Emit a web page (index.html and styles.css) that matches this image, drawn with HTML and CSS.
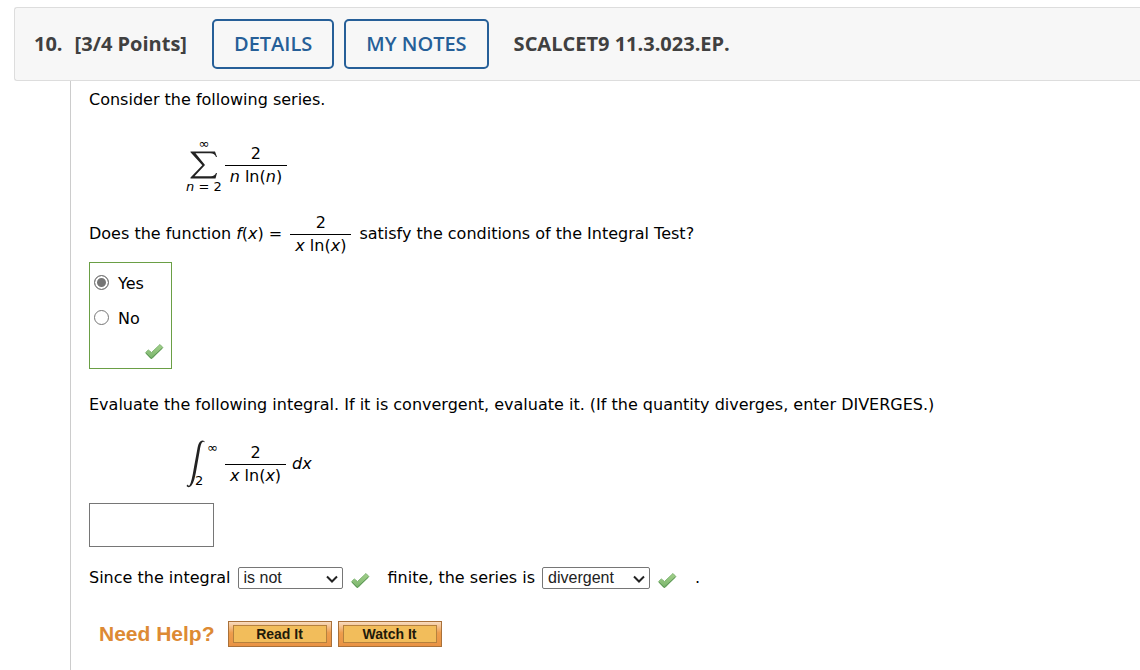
FILE: index.html
```
<!DOCTYPE html>
<html lang="en">
<head>
<meta charset="utf-8">
<title>Question 10</title>
<link rel="stylesheet" href="styles.css">
</head>
<body>
<svg class="defs" aria-hidden="true">
  <defs>
    <linearGradient id="leaf" x1="0" y1="0" x2="0" y2="1">
      <stop offset="0" stop-color="#a3d08a"/>
      <stop offset="1" stop-color="#7ab56c"/>
    </linearGradient>
    <symbol id="tick" viewBox="0 0 20 17">
      <path d="M1.5 9.7 4.3 7 7.5 9.5 16 1.5 18.8 4.5 8 15.5 6.8 15.5Z" fill="url(#leaf)" stroke="#7fb573" stroke-width="1" stroke-linejoin="round"/>
      <path d="M2 10.2 7.3 15.3 18.5 5" fill="none" stroke="#5c9656" stroke-width="1"/>
    </symbol>
  </defs>
</svg>
<main class="question">
  <header class="bar">
    <h1 class="points"><span>10.</span><span>[3/4 Points]</span></h1>
    <div class="actions">
      <button class="action" type="button">DETAILS</button>
      <button class="action" type="button">MY NOTES</button>
    </div>
    <span class="source">SCALCET9 11.3.023.EP.</span>
  </header>
  <form class="content">
    <p class="line">Consider the following series.</p>
    <div class="formula">
      <div class="sum">
        <span class="limit">∞</span>
        <svg class="sigma" viewBox="0 0 28 28" role="img" aria-label="sum"><path d="M.5 .5H25L27 6H26Q25 2.300 20 2.200H5.500L15 14 4.500 25.300H21Q25 25 26 22H27L25.500 27.500H.5V26.500L12.300 14.300.5 1.200Z" fill="#222"/></svg>
        <span class="limit"><i>n</i> = 2</span>
      </div>
      <div class="fraction"><span class="top">2</span><span class="bottom"><i>n</i> ln(<i>n</i>)</span></div>
    </div>
    <div class="line prompt">
      <span>Does the function <i>f</i>(<i>x</i>) =</span>
      <div class="fraction"><span class="top">2</span><span class="bottom"><i>x</i> ln(<i>x</i>)</span></div>
      <span>satisfy the conditions of the Integral Test?</span>
    </div>
    <fieldset class="choices" aria-label="Does it satisfy the conditions?">
      <label class="choice"><input type="radio" name="test" checked><span>Yes</span></label>
      <label class="choice"><input type="radio" name="test"><span>No</span></label>
      <svg class="tick" role="img" aria-label="Correct"><use href="#tick"/></svg>
    </fieldset>
    <p class="line">Evaluate the following integral. If it is convergent, evaluate it. (If the quantity diverges, enter DIVERGES.)</p>
    <div class="formula integral">
      <div class="bounds">
        <svg class="sign" viewBox="0 0 20 48" role="img" aria-label="integral"><path d="M19 2.500Q18.500 .5 16.500 .5 13 .5 11.700 7L8.200 26Q5.500 43 3.500 45.500 2 46 1.500 44.500L.5 46Q1.500 47.500 3.500 47 7.500 45.500 9.800 33L13.500 12Q14.700 3 16.500 2Q18 1.500 19 2.500Z" fill="#222"/></svg>
        <span class="limit upper">∞</span>
        <span class="limit lower">2</span>
      </div>
      <div class="fraction"><span class="top">2</span><span class="bottom"><i>x</i> ln(<i>x</i>)</span></div>
      <i class="differential">dx</i>
    </div>
    <input class="answer" type="text" aria-label="Value of the integral">
    <div class="line conclusion">
      <label for="finite">Since the integral</label>
      <div class="pick wide"><select id="finite"><option>is</option><option selected>is not</option></select><svg viewBox="0 0 12 8"><path d="M1 1.500 6 6.500 11 1.500"/></svg></div>
      <svg class="tick" role="img" aria-label="Correct"><use href="#tick"/></svg>
      <label class="second" for="result">finite, the series is</label>
      <div class="pick"><select id="result"><option>convergent</option><option selected>divergent</option></select><svg viewBox="0 0 12 8"><path d="M1 1.500 6 6.500 11 1.500"/></svg></div>
      <svg class="tick" role="img" aria-label="Correct"><use href="#tick"/></svg>
      <span class="stop">.</span>
    </div>
    <div class="help">
      <strong class="need">Need Help?</strong>
      <button class="aid" type="button"><span>Read It</span></button>
      <button class="aid" type="button"><span>Watch It</span></button>
    </div>
  </form>
</main>
</body>
</html>
```
FILE: styles.css
```
* { box-sizing: border-box; }
body {
  margin: 0;
  background: #fff;
  color: #000;
  font: 16px/20px Verdana, "DejaVu Sans", sans-serif;
}
.defs { position: absolute; width: 0; height: 0; }
.question {
  display: flex;
  flex-direction: column;
  min-height: 100vh;
  padding: 7px 0 0 14px;
}
.bar {
  display: flex;
  align-items: center;
  padding: 11px 19px;
  border: 1px solid #ddd;
  border-right: 0;
  border-radius: 3px 0 0 3px;
  background: #f7f7f7;
  color: #404040;
  font: 700 20px/26px "Open Sans", sans-serif;
}
.points { display: flex; gap: 12px; margin: 0; font: inherit; }
.actions { display: flex; gap: 10px; margin: 0 25px; }
.action {
  height: 50px;
  padding: 0 20px;
  border: 2px solid #265f98;
  border-radius: 5px;
  background: #f7f7f7;
  color: #265f98;
  font: 600 20px/26px "Open Sans", sans-serif;
}
.content {
  flex: 1;
  margin-left: 56px;
  padding: 9px 18px 0;
  border-left: 1px solid #ccc;
}
.line { margin: 0; }
.formula {
  display: flex;
  align-items: center;
  margin: 26px 0 17px 97px;
  gap: 3px;
}
.sum { display: flex; flex-direction: column; align-items: center; }
.limit { font-size: 13px; line-height: 15px; }
.sigma { width: 28px; height: 28px; }
.fraction { display: flex; flex-direction: column; text-align: center; }
.top { height: 24px; border-bottom: 1px solid #000; line-height: 24px; }
.bottom { height: 22px; padding: 0 5px; line-height: 22px; white-space: nowrap; }
.prompt { display: flex; align-items: center; gap: 8px; }
.choices {
  display: flex;
  flex-direction: column;
  width: 83px;
  height: 107px;
  margin: 5px 0 26px;
  padding: 11px 7px 8px 4px;
  border: 1px solid #6a9f45;
}
.choice { display: flex; gap: 9px; height: 35px; }
.choice input { width: 15px; height: 15px; margin: 1px 0; appearance: none; border: 1px solid #767676; border-radius: 50%; }
.choice input:checked { background: #767676; box-shadow: inset 0 0 0 2px #fff; }
.tick { width: 20px; height: 17px; flex: none; }
.choices .tick { align-self: flex-end; }
.integral { margin: 25px 0 15px 97px; }
.bounds { display: grid; grid-template-columns: 9px 12px 15px; grid-template-rows: 24px 24px; }
.sign { width: 20px; height: 48px; grid-area: 1 / 1 / 3 / 3; }
.upper { grid-area: 1 / 3; }
.lower { grid-area: 2 / 2; align-self: end; }
.differential { margin-left: 3px; }
.answer {
  display: block;
  width: 125px;
  height: 44px;
  border: 1px solid #767676;
  padding: 4px 8px;
  font: inherit;
}
.conclusion { display: flex; align-items: center; margin-top: 20px; }
.pick { position: relative; width: 108px; margin: 0 7px; }
.wide { width: 105px; }
.pick select {
  display: block;
  width: 100%;
  height: 22px;
  padding: 0 5px;
  border: 1px solid #767676;
  border-radius: 2px;
  background: #fff;
  color: #222;
  font: 16px/20px "Liberation Sans", Arial, sans-serif;
  appearance: none;
}
.pick svg { position: absolute; right: 5px; top: 8px; width: 12px; height: 8px; fill: none; stroke: #222; stroke-width: 2; pointer-events: none; }
.conclusion .tick { margin-top: 5px; }
.second { margin-left: 18px; }
.stop { margin-left: 18px; }
.help { display: flex; align-items: center; gap: 6px; margin: 32px 0 0 10px; }
.need { margin-right: 7px; color: #dd8a34; font: 700 21px/26px "Liberation Sans", Arial, sans-serif; }
.aid {
  width: 104px;
  height: 26px;
  padding: 3px 4px;
  border: 1px solid #a9713a;
  background: linear-gradient(#f8dcc0, #ee9d4c 45%, #e99345);
  color: #1f1a0a;
  font: 700 14px/16px "Liberation Sans", Arial, sans-serif;
}
.aid span { display: block; border: 1px solid #b5813e; background: #f2bd5b; }
```
